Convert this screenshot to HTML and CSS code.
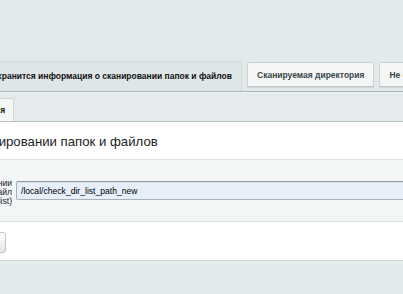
FILE: index.html
```html
<!DOCTYPE html>
<html lang="ru">
<head>
    <meta charset="UTF-8">
    <title>Настройки сканирования</title>
    <link rel="stylesheet" href="styles.css">
</head>
<body>

<div class="tabs">
    <div class="tab tab-active">хранится информация о сканировании папок и файлов</div>
    <div class="tab">Сканируемая директория</div>
    <div class="tab">Не сканируемые директории</div>
</div>

<div class="content">
    <div class="subtabs">
        <div class="subtab">Информация</div>
    </div>

    <div class="panel-title">Информация о сканировании папок и файлов</div>

    <div class="form-row">
        <label class="form-label" for="dir_list">Путь при сканировании<br>(служебный файл<br>dir_list)</label>
        <input class="form-input" id="dir_list" type="text" value="/local/check_dir_list_path_new">
    </div>

    <div class="form-buttons">
        <button class="btn">Сохранить</button>
    </div>
</div>

</body>
</html>
```

FILE: styles.css
```css
* {
    box-sizing: border-box;
    margin: 0;
    padding: 0;
}

body {
    background: #e3eaeb;
    font-family: "Liberation Sans", Arial, sans-serif;
    color: #222;
    overflow: hidden;
    width: 403px;
    height: 294px;
}

/* Top tabs */
.tabs {
    display: flex;
    align-items: flex-end;
    gap: 5px;
    padding-top: 61px;
    height: 91px;
    white-space: nowrap;
}

.tab {
    flex-shrink: 0;
    height: 25px;
    margin-bottom: 4px;
    padding: 0 9px;
    line-height: 24px;
    font-size: 8.5px;
    font-weight: bold;
    color: #3a4649;
    background: #f4f6f6;
    border: 1px solid #ccd4d5;
    border-bottom-color: #bcc5c7;
    border-radius: 2px 2px 0 0;
    box-shadow: 0 1px 1px rgba(0, 0, 0, 0.08);
}

.tab-active {
    height: 30px;
    margin-bottom: 0;
    margin-left: -13px;
    line-height: 28px;
    color: #111;
    background: #dfe6e7;
    border-color: #d2d9da;
    border-bottom: none;
    box-shadow: none;
}

/* Content block */
.content {
    border-top: 1px solid #a8b2b4;
    margin-left: -40px;
}

.subtabs {
    display: flex;
    align-items: flex-end;
    height: 30px;
    background: #e5ebec;
    border-top: 1px solid #f1f4f4;
    border-bottom: 1px solid #b9c2c4;
}

.subtab {
    height: 23px;
    margin-left: -19px;
    padding: 0 8px;
    line-height: 23px;
    font-size: 8.5px;
    font-weight: bold;
    background: #f5f7f7;
    border: 1px solid #d0d7d8;
    border-bottom: none;
}

.panel-title {
    height: 38px;
    margin-left: -84px;
    padding-top: 1px;
    line-height: 38px;
    font-size: 13.2px;
    color: #222;
    background: #fff;
    border-bottom: 1px solid #dde3e4;
    white-space: nowrap;
}

.form-row {
    display: flex;
    align-items: center;
    gap: 4px;
    height: 62px;
    background: #f3f6f6;
    border-bottom: 1px solid #dce2e3;
}

.form-label {
    flex-shrink: 0;
    width: 120px;
    margin-left: -68px;
    padding-top: 4px;
    font-size: 8.6px;
    line-height: 9px;
    text-align: right;
    color: #222;
    white-space: nowrap;
}

.form-input {
    flex: 1;
    min-width: 460px;
    height: 19px;
    padding: 0 4px;
    font-family: "Liberation Sans", Arial, sans-serif;
    font-size: 8.6px;
    color: #000;
    background: #e7f0fa;
    border: 1px solid #a9b2b7;
    border-top-color: #8e989d;
    border-radius: 2px;
    box-shadow: inset 0 1px 1px rgba(0, 0, 0, 0.06);
}

.form-buttons {
    height: 39px;
    padding-top: 9px;
    background: #fff;
    border-bottom: 1px solid #cfd6d7;
}

.btn {
    height: 21px;
    margin-left: -22px;
    padding: 0 10px;
    font-family: "Liberation Sans", Arial, sans-serif;
    font-size: 8.6px;
    font-weight: bold;
    color: #333;
    background: linear-gradient(#fff, #e2e8e9);
    border: 1px solid #bcc5c7;
    border-radius: 3px;
}
```
